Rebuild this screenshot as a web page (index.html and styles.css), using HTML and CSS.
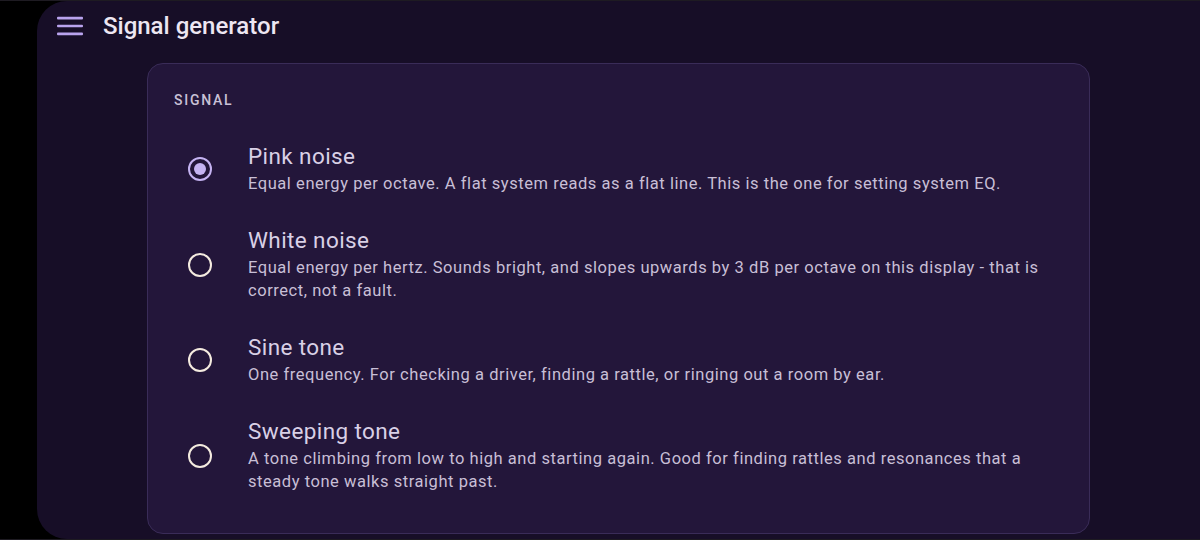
FILE: index.html
```html
<!DOCTYPE html>
<html lang="en">
<head>
<meta charset="utf-8">
<title>Signal generator</title>
<link rel="stylesheet" href="styles.css">
</head>
<body>
<div class="frame">
  <main class="panel">
    <header class="appbar">
      <button class="menu" aria-label="Menu">
        <svg width="26" height="20" viewBox="0 0 26 20"><rect x="0" y="0.8" width="26" height="2.6" rx="1"/><rect x="0" y="8.7" width="26" height="2.6" rx="1"/><rect x="0" y="16.6" width="26" height="2.6" rx="1"/></svg>
      </button>
      <h1 class="title">Signal generator</h1>
    </header>
    <section class="card">
      <div class="label">SIGNAL</div>
      <ul class="options">
        <li class="option selected">
          <span class="radio"><span class="ring"></span></span>
          <div class="text">
            <div class="name">Pink noise</div>
            <div class="desc">Equal energy per octave. A flat system reads as a flat line. This is the one for setting system EQ.</div>
          </div>
        </li>
        <li class="option">
          <span class="radio"><span class="ring"></span></span>
          <div class="text">
            <div class="name">White noise</div>
            <div class="desc">Equal energy per hertz. Sounds bright, and slopes upwards by 3 dB per octave on this display - that is correct, not a fault.</div>
          </div>
        </li>
        <li class="option">
          <span class="radio"><span class="ring"></span></span>
          <div class="text">
            <div class="name">Sine tone</div>
            <div class="desc">One frequency. For checking a driver, finding a rattle, or ringing out a room by ear.</div>
          </div>
        </li>
        <li class="option">
          <span class="radio"><span class="ring"></span></span>
          <div class="text">
            <div class="name">Sweeping tone</div>
            <div class="desc">A tone climbing from low to high and starting again. Good for finding rattles and resonances that a steady tone walks straight past.</div>
          </div>
        </li>
      </ul>
    </section>
  </main>
</div>
</body>
</html>
```
FILE: styles.css
```css
* { box-sizing: border-box; }
html, body { margin: 0; padding: 0; }
body {
  width: 1200px;
  height: 540px;
  background: #000;
  font-family: Roboto, "Noto Sans", "Liberation Sans", sans-serif;
  overflow: hidden;
  border-top: 1px solid #1e1b22;
  border-bottom: 1px solid #1e1b22;
}
.frame {
  height: 538px;
  padding-left: 37px;
  display: flex;
}
.panel {
  flex: 1;
  background: #170e27;
  border-radius: 30px 0 0 30px;
  display: flex;
  flex-direction: column;
}
.appbar {
  height: 51px;
  display: flex;
  align-items: center;
  padding-left: 20px;
  padding-bottom: 1px;
}
.menu {
  background: none;
  border: 0;
  padding: 0;
  width: 26px;
  height: 20px;
  display: flex;
}
.menu svg { fill: #b9a3ee; }
.title {
  margin: 0 0 0 20px;
  font-size: 24px;
  font-weight: 500;
  color: #ede6f2;
  letter-spacing: 0;
}
.card {
  width: 943px;
  margin: 11px auto 0;
  background: #23163a;
  border: 1px solid #3a2c58;
  border-radius: 16px;
  padding: 27px 26px 40px 26px;
}
.label {
  font-size: 14px;
  letter-spacing: 1.75px;
  color: #c9c1d6;
  line-height: 18px;
  font-weight: 500;
}
.options {
  list-style: none;
  margin: 34px 0 0;
  padding: 0;
  display: flex;
  flex-direction: column;
  gap: 32px;
}
.option {
  display: flex;
  align-items: center;
}
.radio {
  width: 52px;
  flex: none;
  display: flex;
  justify-content: center;
}
.ring {
  width: 24px;
  height: 24px;
  border-radius: 50%;
  border: 2.5px solid #f4ebdf;
  display: flex;
  align-items: center;
  justify-content: center;
}
.selected .ring { border-color: #c5b3f2; }
.selected .ring::after {
  content: "";
  width: 12px;
  height: 12px;
  border-radius: 50%;
  background: #c5b3f2;
}
.text {
  margin-left: 22px;
  flex: 1;
}
.name {
  font-size: 22.5px;
  line-height: 26px;
  color: #d9d0e6;
  letter-spacing: 0.4px;
}
.desc {
  margin-top: 3px;
  font-size: 16.5px;
  line-height: 23px;
  color: #c8bfd6;
  letter-spacing: 0.55px;
}
```
